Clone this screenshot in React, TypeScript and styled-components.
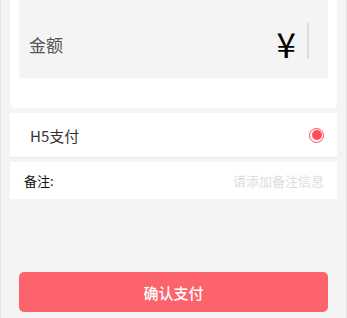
import React from 'react'
import styled, { createGlobalStyle } from 'styled-components'

const GlobalStyle = createGlobalStyle`
    html, body {
        margin: 0;
        padding: 0;
        background: #f4f4f4;
    }
    * {
        box-sizing: border-box;
    }
`

const Page = styled.div`
    width: 347px;
    height: 318px;
    overflow: hidden;
    background: #f4f4f4;
    border-left: 1px solid #e4e4e4;
    border-right: 1px solid #e4e4e4;
    padding: 0 9px;
    font-family: 'Noto Sans CJK SC', 'Noto Sans', sans-serif;
    display: flex;
    flex-direction: column;
`

const AmountCard = styled.div`
    background: #fff;
    border-radius: 0 0 5px 5px;
    padding: 0 9px 30px;
`

const AmountBox = styled.div`
    height: 78px;
    background: #f4f4f4;
    display: flex;
    align-items: center;
    padding: 10px 0 0 10px;
`

const AmountLabel = styled.span`
    flex: 1;
    font-size: 17px;
    color: #555;
`

const Currency = styled.span`
    font-size: 35px;
    color: #000;
    line-height: 1;
    margin-right: 11px;
    margin-top: -4px;
    font-family: 'Noto Sans CJK SC', sans-serif;
`

const Caret = styled.div`
    width: 2px;
    height: 36px;
    background: #dedede;
    margin-right: 19px;
    margin-top: -6px;
`

const Row = styled.div<{ height: number; gap: number }>`
    margin-top: ${({ gap }) => gap}px;
    height: ${({ height }) => height}px;
    background: #fff;
    display: flex;
    align-items: center;
`

const PayRow = styled(Row)`
    padding: 0 13px 0 20px;
    border-bottom: 1px solid #e8e8e8;
`

const PayLabel = styled.span`
    flex: 1;
    font-size: 15px;
    color: #333;
`

const Radio = styled.span`
    width: 15px;
    height: 15px;
    border-radius: 50%;
    border: 1px solid #ff4d5a;
    display: flex;
    align-items: center;
    justify-content: center;
    &::after {
        content: '';
        width: 10px;
        height: 10px;
        border-radius: 50%;
        background: #ff4d5a;
    }
`

const NoteRow = styled(Row)`
    padding: 0 13px 0 14px;
`

const NoteLabel = styled.span`
    font-size: 13px;
    color: #111;
    white-space: nowrap;
`

const NoteInput = styled.input`
    flex: 1;
    border: none;
    outline: none;
    background: transparent;
    text-align: right;
    font-size: 13px;
    font-family: inherit;
    color: #333;
    padding: 0;
    &::placeholder {
        color: #dcdcdc;
    }
`

const SubmitButton = styled.button`
    margin: 73px 9px 0;
    height: 40px;
    border: none;
    border-radius: 5px;
    background: #fc636b;
    color: #fff;
    font-size: 15px;
    font-weight: 500;
    font-family: inherit;
`

export default function App() {
    return (
        <>
            <GlobalStyle />
            <Page>
                <AmountCard>
                    <AmountBox>
                        <AmountLabel>金额</AmountLabel>
                        <Currency>¥</Currency>
                        <Caret />
                    </AmountBox>
                </AmountCard>
                <PayRow height={45} gap={5}>
                    <PayLabel>H5支付</PayLabel>
                    <Radio />
                </PayRow>
                <NoteRow height={37} gap={4}>
                    <NoteLabel>备注:</NoteLabel>
                    <NoteInput placeholder="请添加备注信息" />
                </NoteRow>
                <SubmitButton>确认支付</SubmitButton>
            </Page>
        </>
    )
}
